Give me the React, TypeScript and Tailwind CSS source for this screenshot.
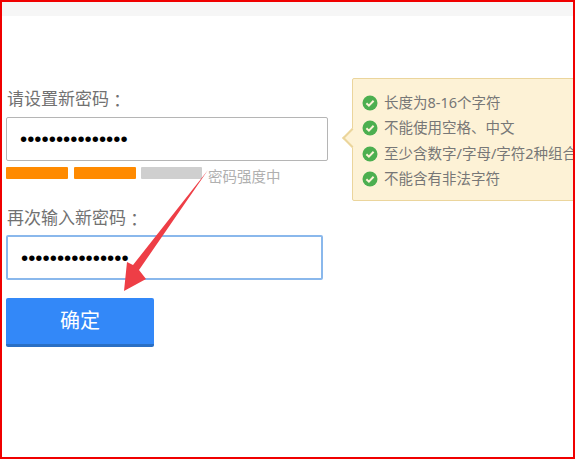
const FONT = "font-['Liberation_Sans','Noto_Sans_CJK_SC',sans-serif]";

const rules = ['长度为8-16个字符', '不能使用空格、中文', '至少含数字/字母/字符2种组合', '不能含有非法字符'];

function CheckIcon() {
  return (
    <svg width="16" height="16" viewBox="0 0 16 16" className="shrink-0">
      <circle cx="8" cy="8" r="7.5" fill="#4caf50" />
      <path d="M4.4 8.2l2.5 2.4 4.7-4.8" fill="none" stroke="#fdf3d8" strokeWidth="2" />
    </svg>
  );
}

function Tooltip() {
  return (
    <div className="absolute left-[350px] top-[62px] w-[240px] h-[123px] bg-[#fdf2d6] border border-[#ebd59c] rounded-[2px] pl-[9px] pt-[11px]">
      <div className="absolute left-[-8px] top-[52px] w-[14px] h-[14px] rotate-45 bg-[#fdf2d6] border-l-2 border-b-2 border-[#ebd59c]" />
      <ul className="relative flex flex-col">
        {rules.map((r) => (
          <li
            key={r}
            className="flex items-center gap-[6px] h-[25.5px] text-[14.5px] text-[#777] whitespace-nowrap font-['Noto_Sans','Noto_Sans_CJK_SC',sans-serif]"
          >
            <CheckIcon />
            {r}
          </li>
        ))}
      </ul>
    </div>
  );
}

function PasswordInput({ className }: { className: string }) {
  return (
    <input
      type="password"
      readOnly
      value="123456789012345"
      className={`block bg-white rounded-[2px] pl-[13px] text-[20.5px] text-black outline-none font-['Liberation_Sans',sans-serif] ${className}`}
    />
  );
}

function Label({ text }: { text: string }) {
  return (
    <div className="flex items-center h-[24px] pt-[4px] text-[17px] leading-[20px] text-[#717171] pl-[1px]">
      <span>{text}</span>
      <span className="font-['Noto_Sans_CJK_TC',sans-serif] leading-[20px]">：</span>
    </div>
  );
}

export default function App() {
  return (
    <div className={`relative w-[575px] h-[459px] overflow-hidden bg-white border-2 border-[#f00000] ${FONT}`}>
      <div className="h-[14px] bg-[#f6f6f6]" />
      <div className="relative pl-[4px]">
        <Tooltip />
        <div className="pt-[70px]">
          <Label text="请设置新密码" />
        </div>
        <PasswordInput className="mt-[7px] w-[322px] h-[44px] border border-[#b5b5b5]" />
        <div className="mt-[6px] flex items-start gap-[6px]">
          <div className="w-[62px] h-[12px] bg-[#ff8a00] rounded-[1px]" />
          <div className="w-[62px] h-[12px] bg-[#ff8a00] rounded-[1px]" />
          <div className="w-[61px] h-[12px] bg-[#cfcfcf] rounded-[1px] -ml-[1px]" />
          <span className="text-[14.5px] leading-[20px] text-[#b0b0b0] whitespace-nowrap">密码强度中</span>
        </div>
        <div className="mt-[18px]">
          <Label text="再次输入新密码" />
        </div>
        <PasswordInput className="mt-[6px] w-[317px] h-[45px] border-2 border-[#8ab8ec]" />
        <button className="mt-[18px] block w-[148px] h-[49px] bg-[#3388f8] border-b-[3px] border-[#2a6fc4] rounded-[2px] text-[20px] text-white">
          确定
        </button>
      </div>
      <svg width="575" height="459" className="absolute left-[-2px] top-[-2px] pointer-events-none">
        <path d="M208 170L133 265L127 262L124 291L146 279L139 270Z" fill="#ee3e46" />
      </svg>
    </div>
  );
}
